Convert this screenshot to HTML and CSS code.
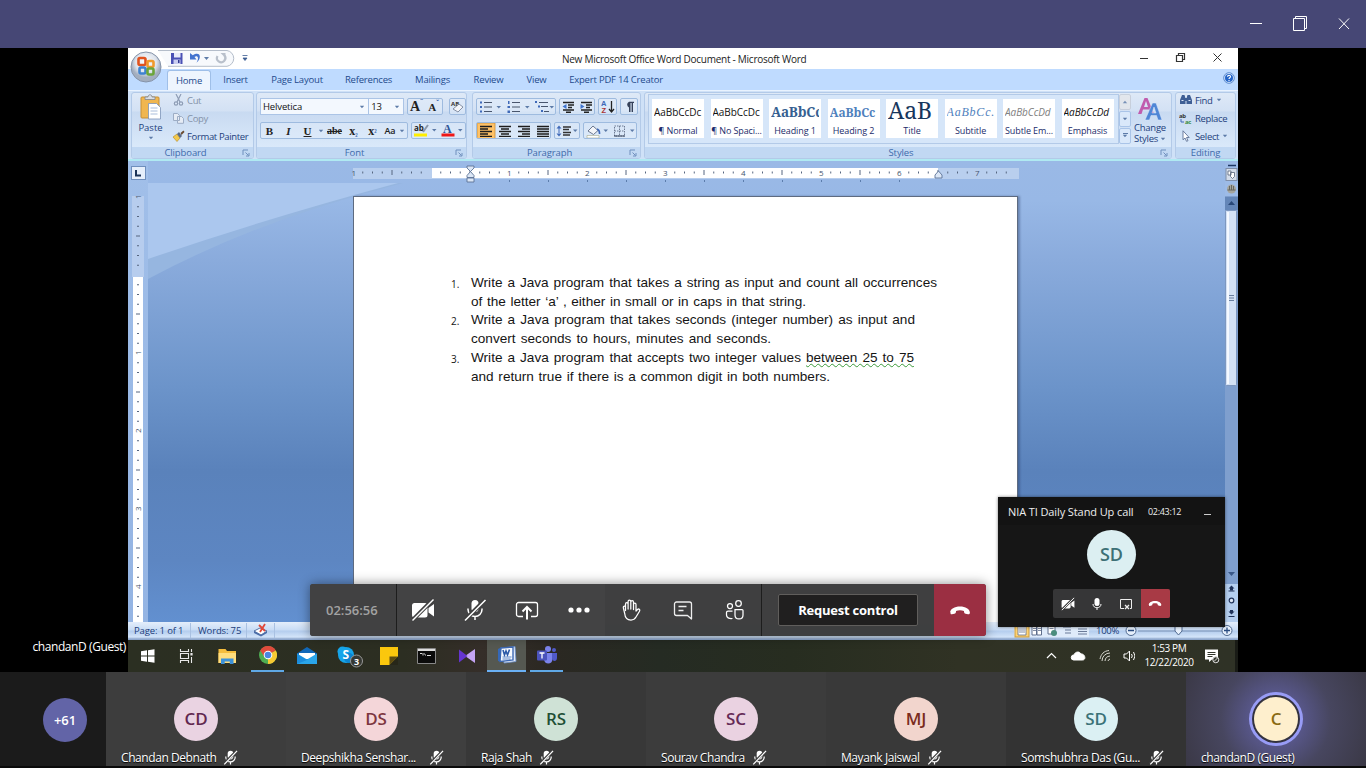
FILE: index.html
```html
<!DOCTYPE html>
<html lang="en">
<head>
<meta charset="utf-8">
<title>Meeting</title>
<link rel="stylesheet" href="styles.css">
</head>
<body>
<svg class="defs" width="0" height="0">
  <symbol id="micoff" viewBox="0 0 24 24"><rect x="8.5" y="2" width="7" height="12" rx="3.5" fill="#fff"/><path d="M5 10.5v1a7 7 0 0 0 14 0v-1M12 18.500v3.500" fill="none" stroke="#fff" stroke-width="1.500"/><path d="M1.500 22.500 22.500 1.500" stroke="#3e3e3e" stroke-width="4"/><path d="M2 22.500 22.500 2" stroke="#fff" stroke-width="1.600"/></symbol>
  <symbol id="micoff-s" viewBox="0 0 24 24"><rect x="7.500" y="1" width="9" height="14" rx="4.500" fill="#fff"/><path d="M4.500 10.500v1a7.500 7.500 0 0 0 15 0v-1M12 18.500v4.500" fill="none" stroke="#fff" stroke-width="1.900"/><path d="M1.500 22 22 1.500" stroke="#3e3e3e" stroke-width="4.500"/><path d="M2 23 22.500 1.500" stroke="#fff" stroke-width="2"/></symbol>
  <symbol id="camoff" viewBox="0 0 24 24"><rect x="1" y="5" width="15.500" height="14.500" rx="2.500" fill="#fff"/><path d="M17.500 10 23 6v12.500l-5.500-4z" fill="#fff"/><path d="M1 22.500 22.500 1" stroke="#404041" stroke-width="4"/><path d="M1.500 22.500 22.500 1.500" stroke="#fff" stroke-width="1.500"/></symbol>
  <symbol id="hang" viewBox="0 0 24 12"><path d="M1.200 8.200C1.500 4.500 6 1.700 12 1.700s10.500 2.800 10.800 6.500c.1 1.500-.8 2.100-2 1.900l-2.700-.5c-1-.2-1.500-.8-1.600-1.700l-.2-1.400c-2.700-1-5.900-1-8.600 0l-.2 1.400c-.1.900-.6 1.500-1.600 1.700l-2.700.5c-1.200.2-2.100-.4-1.200-1.900z" fill="#fff"/></symbol>
  <symbol id="dn" viewBox="0 0 6 4"><path d="M.8.8h4.400L3 3.300z" fill="#5d7ba8"/></symbol>
  <symbol id="launch" viewBox="0 0 8 8"><path d="M1 6V1h5M3.500 3.500l3 3M7 4v3H4" fill="none" stroke="#6f8fbd" stroke-width="1"/></symbol>
</svg>

<header class="appbar">
  <svg width="110" height="24" viewBox="0 0 110 24" fill="none" stroke="#fff"><path d="M6 11.500h12"/><path d="M49.500 6.500h11v12h-11z"/><path d="M51.500 6V4.500h11v12H61"/><path d="m95 6.500 10 10.500m0-10.500L95 17"/></svg>
</header>

<main class="stage">
  <div class="side"><span class="self">chandanD (Guest)</span></div>

  <section class="screen">
    <div class="wtitle">
      <svg class="quick" width="136" height="21" viewBox="0 0 136 21">
        <path d="M30 2.500h69a8 8 0 0 1 0 15.800H40" fill="#f7f9fc" stroke="#b4bdca"/>
        <path d="M43 5h11.500v11H43z" fill="#4a51b5"/><path d="M46 5h6.500v4.500H46z" fill="#e8ebfa"/><path d="M45.500 11.500h7V16h-7z" fill="#c9cdf0"/><path d="M50 12h1.500v3H50z" fill="#31388f"/>
        <path d="M62 5v6.500h6.500L66.500 9c3-2 5 1 2 5.800 6-5 3.500-12-3.700-7.500z" fill="#4474cf"/>
        <path d="M76 9h5l-2.500 3z" fill="#5d7ba8"/>
        <path d="M96.500 7.500A4.200 4.200 0 1 1 89.500 8" fill="none" stroke="#b9c0cb" stroke-width="2.200"/><path d="M92.500 5h5v5z" fill="#b9c0cb"/>
        <path d="M114.500 7.500h5M115 10h4l-2 2.500z" fill="#3c5d92" stroke="#3c5d92" stroke-width=".8"/>
      </svg>
      <span class="wname">New Microsoft Office Word Document - Microsoft Word</span>
      <svg class="wctl" width="90" height="21" viewBox="0 0 90 21" fill="none" stroke="#333"><path d="M0 10.500h8"/><path d="M36.500 7.500h6v6h-6zM38.500 7V5.500h6v6H43" stroke-width="1.200"/><path d="m73.500 5.500 8 8m0-8-8 8"/></svg>
    </div>

    <nav class="tabs">
      <svg class="orb" width="34" height="34" viewBox="0 0 34 34">
        <defs><radialGradient id="og" cx=".5" cy=".35"><stop offset="0" stop-color="#fff"/><stop offset=".7" stop-color="#dde3ec"/><stop offset="1" stop-color="#a3aebf"/></radialGradient></defs>
        <circle cx="17" cy="17" r="15" fill="url(#og)" stroke="#8593a9"/>
        <g fill="none" stroke-width="2.600"><rect x="9.500" y="8" width="7" height="7" rx="1.500" stroke="#e0531f"/><rect x="18.500" y="11" width="6" height="6" rx="1.500" stroke="#f09a2b"/><rect x="10.500" y="17.500" width="6" height="6" rx="1.500" stroke="#3e82d0"/><rect x="18.500" y="18.500" width="6" height="6" rx="1.500" stroke="#6ba53a"/></g>
      </svg>
      <span class="tab on t1">Home</span><span class="tab t2">Insert</span><span class="tab t3">Page Layout</span><span class="tab t4">References</span><span class="tab t5">Mailings</span><span class="tab t6">Review</span><span class="tab t7">View</span><span class="tab t8">Expert PDF 14 Creator</span>
      <svg class="help" width="12" height="12" viewBox="0 0 12 12"><circle cx="6" cy="6" r="5.300" fill="#dcebfd" stroke="#5b8bd0"/><circle cx="6" cy="6" r="4" fill="#2464c8"/><path d="M4.500 4.800C4.500 2.800 7.600 2.900 7.500 4.700 7.400 5.800 6 5.700 6 7M6 8v1.200" fill="none" stroke="#fff" stroke-width="1.100"/></svg>
    </nav>

    <div class="ribbon">
      <div class="grp g-clip">
        <div class="gbody">
          <div class="paste"><svg width="24" height="26" viewBox="0 0 24 26"><rect x="2" y="3" width="18" height="21" rx="1" fill="#f0b64f" stroke="#c78f35"/><path d="M6 5.500V3h3c0-3 4-3 4 0h3v2.500z" fill="#d9dde3" stroke="#7e858f" stroke-width=".8"/><path d="M9.500 9.500h8l4 4V25h-12z" fill="#fff" stroke="#7b93b8" stroke-width=".8"/><path d="M11.500 14h7M11.500 17h7M11.500 20h7" stroke="#a9bddb"/></svg><span>Paste</span><svg width="6" height="4"><use href="#dn"/></svg></div>
          <div class="cliplist">
            <span class="cl dim"><svg width="13" height="12" viewBox="0 0 13 12" fill="none" stroke="#8e9db5" stroke-width="1.200"><path d="m4 0 4 8M9 0 5 8"/><circle cx="4" cy="9.500" r="1.700"/><circle cx="9" cy="9.500" r="1.700"/></svg><b>Cut</b></span>
            <span class="cl dim"><svg width="13" height="12" viewBox="0 0 13 12" fill="#e6ecf5" stroke="#9dadc5"><path d="M1.500 1.500h4l2 2v5h-6zM5.500 4.500h4l2 2v4.800h-6z"/></svg><b>Copy</b></span>
            <span class="cl"><svg width="13" height="12" viewBox="0 0 13 12"><path d="m1 7 4-3 3 4-3 3.500z" fill="#f2c94c" stroke="#b68620" stroke-width=".6"/><path d="m5 4 2-2 3 4-2 2z" fill="#5a6b86"/><path d="m8.500 3 3-2.500 1 1.500-3 3z" fill="#6a4a2e"/></svg><b>Format Painter</b></span>
          </div>
        </div>
        <div class="glabel"><span>Clipboard</span><svg width="8" height="8"><use href="#launch"/></svg></div>
      </div>

      <div class="grp g-font">
        <div class="gbody rows">
          <div class="brow">
            <span class="combo cf">Helvetica<svg width="6" height="4"><use href="#dn"/></svg></span><span class="combo cs">13<svg width="6" height="4"><use href="#dn"/></svg></span>
            <span class="bg w36 serif"><i class="big">A<sup>ˆ</sup></i><i class="sm">A<sup>ˇ</sup></i></span>
            <span class="bg w17 ml6"><svg width="15" height="14" viewBox="0 0 15 14"><text x="1" y="6" class="tiny">AB</text><path d="m3 9 6-5 4 3-5 5z" fill="#f4f6fa" stroke="#6c7890" stroke-width=".8"/></svg></span>
          </div>
          <div class="brow">
            <span class="bg w148 serif"><i><b>B</b></i><i><em>I</em></i><i><u><b>U</b></u></i><svg width="6" height="4"><use href="#dn"/></svg><i class="st"><s>abe</s></i><i class="x">x<sub>₂</sub></i><i class="x">x<sub>²</sub></i><i class="aa">Aa</i><svg width="6" height="4"><use href="#dn"/></svg></span>
            <span class="bg w56 ml3"><svg width="53" height="15" viewBox="0 0 53 15"><text x="2" y="8" class="ab">ab</text><path d="m11 9 5-7" stroke="#8a97aa" stroke-width="2"/><path d="M2 10.500h13v3H2z" fill="#ffee00"/><path d="M20 6h4.500l-2.200 2.500zM46 6h4.500l-2.200 2.500z" fill="#5d7ba8"/><text x="31" y="10" class="ca">A</text><path d="M29.500 10.500h13v3h-13z" fill="#f01818"/></svg></span>
          </div>
        </div>
        <div class="glabel"><span>Font</span><svg width="8" height="8"><use href="#launch"/></svg></div>
      </div>

      <div class="grp g-para">
        <div class="gbody rows">
          <div class="brow gap3">
            <span class="bg w80"><svg width="78" height="16" viewBox="0 0 78 16"><g stroke="#49566d" stroke-width="1.200"><path d="M7 3.500h8M7 8h8M7 12.500h8M35 3.500h8M35 8h8M35 12.500h8M62 3.500h9M64 7.500h7M67 12.500h5"/></g><g fill="#3f69b8"><path d="M3 2.500h2v2H3zM3 7h2v2H3zM3 11.500h2v2H3zM31 2h1.500v3H31zM30.500 7h2.500v2h-2.500zM30.500 11.500h2.500v2.500h-2.500zM58 2h2v2h-2zM61 6.500h2v2h-2zM64 11h2v2h-2z"/></g><path d="M19.500 7h4.500l-2.200 2.500zM48 7h4.500l-2.200 2.500zM72.500 7H77l-2.200 2.500z" fill="#5d7ba8"/></svg></span>
            <span class="bg w36"><svg width="35" height="16" viewBox="0 0 35 16"><path d="M3 3.500h11M8 6h6M8 8.500h4M3 11h11M6 13.300h5M21 3.500h11M26 6h6M26 8.500h4M21 11h11M24 13.300h5" stroke="#222" stroke-width="1.400"/><path d="m6.500 5-4 2.500 4 2.500zM20.500 5l4 2.500-4 2.500z" fill="#3f74cf"/></svg></span>
            <span class="bg w19"><svg width="17" height="15" viewBox="0 0 17 15"><text x="2" y="7" class="sa">A</text><text x="2.500" y="14" class="sz">Z</text><path d="M12.500 2v11m-2.500-3 2.500 3 2.500-3" fill="none" stroke="#222" stroke-width="1.300"/></svg></span>
            <span class="bg w18"><svg width="16" height="16" viewBox="0 0 16 16"><path d="M8 8.500a3.200 3.200 0 0 1 0-5.800h5V4h-1v9h-1.400V4H9.500v9H8z" fill="#36425a"/></svg></span>
          </div>
          <div class="brow gap3">
            <span class="bg w76"><svg width="75" height="16" viewBox="0 0 75 16"><rect width="18" height="16" fill="#ffc267" stroke="#c98f38" stroke-width=".8"/><path d="M3 3.500h12M3 6h8M3 8.500h12M3 11h8M3 13.300h12M22 3.500h12M24 6h8M22 8.500h12M24 11h8M22 13.300h12M41 3.500h12M45 6h8M41 8.500h12M45 11h8M41 13.300h12M60 3.500h12M60 6h12M60 8.500h12M60 11h12M60 13.300h12" stroke="#1d1d1d" stroke-width="1.300"/></svg></span>
            <span class="bg w26"><svg width="25" height="16" viewBox="0 0 25 16"><path d="M8 4h8M8 6.500h6M8 9.500h8M8 12h7" stroke="#333" stroke-width="1.300"/><path d="M1.500 5.500 4 2.500l2.500 3zM1.500 10.500l2.500 3 2.500-3zM3.500 5h1v6h-1z" fill="#3f69b8"/><path d="M18 6.500h4.500L20.200 9z" fill="#5d7ba8"/></svg></span>
            <span class="bg w54"><svg width="53" height="16" viewBox="0 0 53 16"><path d="m4 8 5-5 5 4.500-4.500 4z" fill="#f3f5f9" stroke="#6c7890"/><path d="M13 6c3 1 2.500 3 2.500 5" stroke="#3f69b8" stroke-width="1.600" fill="none"/><path d="M3 12.500h12V15H3z" fill="#fff" stroke="#a5a98c" stroke-width=".6"/><path d="M19.500 6.500H24L21.800 9zM46 6.500h4.500L48.200 9z" fill="#5d7ba8"/><path d="M30.500 3h10v10h-10zM35.500 3v10M30.500 8h10" fill="none" stroke="#6d7a92" stroke-dasharray="1.500 1"/><path d="M30 13h11" stroke="#39445a"/></svg></span>
          </div>
        </div>
        <div class="glabel"><span>Paragraph</span><svg width="8" height="8"><use href="#launch"/></svg></div>
      </div>

      <div class="grp g-sty">
        <div class="gbody">
          <div class="gallery">
            <div class="sc"><span class="sp">AaBbCcDc</span><span class="sn">¶ Normal</span></div>
            <div class="sc"><span class="sp">AaBbCcDc</span><span class="sn">¶ No Spaci...</span></div>
            <div class="sc"><span class="sp h1">AaBbCc</span><span class="sn">Heading 1</span></div>
            <div class="sc"><span class="sp h2">AaBbCc</span><span class="sn">Heading 2</span></div>
            <div class="sc"><span class="sp ti">AaB</span><span class="sn">Title</span></div>
            <div class="sc"><span class="sp su">AaBbCc.</span><span class="sn">Subtitle</span></div>
            <div class="sc"><span class="sp se">AaBbCcDd</span><span class="sn">Subtle Em...</span></div>
            <div class="sc"><span class="sp em">AaBbCcDd</span><span class="sn">Emphasis</span></div>
          </div>
          <div class="gscroll"><i class="off"><svg width="6" height="4" class="flip"><use href="#dn"/></svg></i><i><svg width="6" height="4"><use href="#dn"/></svg></i><i class="more"><svg width="6" height="4"><use href="#dn"/></svg></i></div>
          <div class="change"><svg width="28" height="26" viewBox="0 0 28 26"><path d="M2 18 8.500 2h3L18 18h-3.500l-1.500-4.500H7L5.500 18zM8 11h4L10 5z" fill="#c05cae"/><path d="m9 24 7.500-17h3.500L26 24h-4l-1.500-4.500h-5.500L13.500 24zM16 17h4l-2-6z" fill="#4f86d6" stroke="#dce8f8" stroke-width=".5"/></svg><span>Change</span><span>Styles <svg width="6" height="4"><use href="#dn"/></svg></span></div>
        </div>
        <div class="glabel"><span>Styles</span><svg width="8" height="8"><use href="#launch"/></svg></div>
      </div>

      <div class="grp g-edit">
        <div class="gbody edit">
          <span class="cl"><svg width="14" height="12" viewBox="0 0 14 12" fill="#3f5f95"><path d="M3 1h2.500l1 3.500V10H1V6zM8.500 1H11l2 5v4H7.500V4.500zM6 4h2v3H6z"/><path d="M2.500 6.500h2M9.500 6.500h2" stroke="#dce8f8"/></svg><b>Find <svg width="6" height="4"><use href="#dn"/></svg></b></span>
          <span class="cl"><svg width="14" height="12" viewBox="0 0 14 12"><text x="0" y="5.500" class="tiny">ab</text><text x="6" y="11.500" class="tiny gr">ac</text><path d="M2 7v3h3" fill="none" stroke="#3f69b8"/></svg><b>Replace</b></span>
          <span class="cl"><svg width="14" height="12" viewBox="0 0 14 12"><path d="M4 .8v9l2-1.800 1.500 3.300 1.500-.6L7.500 7.500h2.700z" fill="#fff" stroke="#5f7396" stroke-width=".9"/></svg><b>Select <svg width="6" height="4"><use href="#dn"/></svg></b></span>
        </div>
        <div class="glabel"><span>Editing</span></div>
      </div>
    </div>

    <div class="work">
      <div class="leftcol">
        <span class="tabsel"><svg width="12" height="12" viewBox="0 0 12 12"><path d="M4 3v5.500h5" fill="none" stroke="#1b3358" stroke-width="2"/></svg></span>
        <svg class="vruler" width="20" height="426" viewBox="0 0 20 426">
          <defs><pattern id="vt" x="0" y="79" width="20" height="78" patternUnits="userSpaceOnUse"><path d="M9 9.750h2M9 19.500h2M9 29.250h2M8 39h4M9 48.750h2M9 58.500h2M9 68.250h2" stroke="#55657f"/></pattern></defs>
          <path d="M4 0h12v81H4z" fill="#b7cdee"/><path d="M5 81h10v345H5z" fill="#fff"/><path d="M4 0h12v426H4z" fill="url(#vt)"/>
          <g class="rn"><text transform="translate(13 3) rotate(-90)">1</text><text transform="translate(13 159) rotate(-90)">1</text><text transform="translate(13 237) rotate(-90)">2</text><text transform="translate(13 315) rotate(-90)">3</text><text transform="translate(13 393) rotate(-90)">4</text></g>
        </svg>
      </div>
      <div class="canvas">
        <svg class="swoosh" width="260" height="100" viewBox="0 0 260 100"><path d="M0 0h255Q110 37 0 96z" fill="#96b6e0"/><path d="M0 0h250Q120 35 0 76z" fill="#abc7ee"/></svg>
        <svg class="hruler" width="666" height="22" viewBox="0 0 666 22">
          <defs><pattern id="ht" x="78" y="0" width="78" height="22" patternUnits="userSpaceOnUse"><path d="M9.750 10.500v2M19.500 10.500v2M29.250 10.500v2M39 9v5M48.750 10.500v2M58.500 10.500v2M68.250 10.500v2" stroke="#55657f"/></pattern></defs>
          <path d="M0 7h666v11H0z" fill="#b9cfee"/><path d="M79 7h506v10H79z" fill="#fff"/><path d="M0 7h660v10H0z" fill="url(#ht)"/>
          <g class="rn"><text x="-1.500" y="15">1</text><text x="154" y="15">1</text><text x="232" y="15">2</text><text x="310" y="15">3</text><text x="388" y="15">4</text><text x="466" y="15">5</text><text x="544" y="15">6</text><text x="622" y="15">7</text></g>
          <path d="M156.500 19v2M195.500 19v2M234.500 19v2M273.500 19v2M312.500 19v2M351.500 19v2M390.500 19v2M429.500 19v2M468.500 19v2M507.500 19v2M546.500 19v2" stroke="#5c7dac"/>
          <g fill="#dce7f6" stroke="#5c7396" stroke-width=".9"><path d="M114 5h7v2l-3.500 3.500L114 7zM117.500 10.500l3.500 4v2h-7v-2zM114 17h7v4h-7zM585.500 10l3.500 4v3h-7v-3z"/></g>
        </svg>
        <article class="page">
          <ol class="doc">
            <li><span class="num">1.</span><div><span class="ln a1">Write a Java program that takes a string as input and count all occurrences</span><span class="ln a2">of the letter ‘a’ , either in small or in caps in that string.</span></div></li>
            <li><span class="num">2.</span><div><span class="ln a3">Write a Java program that takes seconds (integer number) as input and</span><span class="ln a4">convert seconds to hours, minutes and seconds.</span></div></li>
            <li><span class="num">3.</span><div><span class="ln a5">Write a Java program that accepts two integer values <u class="gram">between 25 to 75</u></span><span class="ln a6">and return true if there is a common digit in both numbers.</span></div></li>
          </ol>
        </article>
      </div>
      <svg class="vscroll" width="13" height="461" viewBox="0 0 13 461">
        <path d="M0 35h13v388H0z" fill="#7f9fce"/><path d="M0 423h13v38H0z" fill="#b4ceef"/>
        <path d="M3 4.500h8" stroke="#1f3864" stroke-width="1.500"/><rect x="1" y="7.500" width="11" height="12" fill="#d3dcea" stroke="#7f8ea8"/><path d="M3 10h3v4H3zM5.500 11.500h4v4l-2 2-2-2z" fill="#fff" stroke="#56637a" stroke-width=".8"/>
        <circle cx="6.500" cy="28" r="4.500" fill="#a5a59e"/><path d="M2.500 29h8M4.500 25v4M6.500 24v5M8.500 25v4" stroke="#66665f"/>
        <path d="M0 36h13v13H0z" fill="#6486b8"/><path d="M3 44h7l-3.500-4z" fill="#284777"/>
        <rect x=".5" y="49.500" width="11" height="175" rx="1" fill="#d3e1f5" stroke="#7d97bf"/><path d="M3 51v172" stroke="#f5f9ff" stroke-width="2"/><path d="M4 134.500h5M4 137h5M4 139.500h5" stroke="#6a7f9f"/>
        <path d="M3 411h7l-3.500 4z" fill="#3a5888"/><path d="M3.500 427.500 6.500 424.500l3 3zM5 427.500h3v2H5zM3.500 450.500h6l-3 3zM5 449h3v2H5z" fill="#20335a"/><path d="M3.500 430h6M3.500 455.500h6" stroke="#20335a"/><circle cx="6.500" cy="439.500" r="2.300" fill="#dce7f6" stroke="#20335a" stroke-width="1.200"/>
      </svg>
    </div>

    <div class="status">
      <span class="s1">Page: 1 of 1</span><span class="s2">Words: 75</span><span class="s3"><svg width="16" height="14" viewBox="0 0 16 14"><path d="m1 8 6-3 7 3-6 4z" fill="#fff" stroke="#5572a2"/><path d="m1 8 7 4 6-4v2l-6 3.500L1 10z" fill="#4b6da8"/><path d="m6 2 6 6m0-7L7 9" stroke="#e0483a" stroke-width="1.800"/></svg></span>
      <svg class="sview" width="224" height="16" viewBox="0 0 224 16"><path d="M0 1h75v13H0z" fill="#dfebfa"/><rect x="1" y="1" width="14" height="13" fill="#ffd272" stroke="#c99b3e"/><path d="M4 3h8v9H4z" fill="#fff" stroke="#5f6f8d" stroke-width=".8"/><path d="M5 5h6M5 7h6M5 9h6" stroke="#5f6f8d" stroke-width=".8"/><path d="M18 3h4.500v9H18zM23 3h4.500v9H23zM34 3h7v8h-7z" fill="#fff" stroke="#5f6f8d"/><path d="M19 5.500h3M19 7.500h3M24 5.500h3M24 7.500h3M35.500 5.500h4" stroke="#5f6f8d" stroke-width=".8"/><circle cx="40" cy="10" r="3" fill="#4b8d7d"/><path d="M49 4h8M51 7h6M51 10h6M64 3.500h9M64 6h9M64 8.500h9M64 11h9" stroke="#6a7a97" stroke-width="1.200"/><text x="82" y="11" class="pct">100%</text><path d="M124 8h88" stroke="#7890b4"/><g fill="#e6effb" stroke="#50698f"><circle cx="117" cy="7.500" r="5"/><circle cx="213" cy="7.500" r="5"/><path d="M161 3h7v5l-3.500 4-3.500-4z"/></g><path d="M114 7.500h6M210 7.500h6M213 4.500v6" stroke="#294b80" stroke-width="1.300"/></svg>
    </div>

    <div class="taskbar">
      <span class="tk k1"><svg width="14" height="14" viewBox="0 0 14 14" fill="#fff"><path d="M0 2.200 6 1.300v5.200H0zM7 1.200 13.500.2v6.300H7zM0 7.500h6v5.200l-6-.9zM7 7.500h6.500v6.300L7 12.800z"/></svg></span>
      <span class="tk k2"><svg width="14" height="14" viewBox="0 0 14 14" fill="none" stroke="#e8e8e8" stroke-width="1.100"><path d="M1.500 4.500h8v5h-8zM1.500 0v2.500h8V0M1.500 14v-2.500h8V14M12.500 0v3M12.500 8v6"/><path d="M12.500 4v2.500" stroke-width="2.200"/></svg></span>
      <span class="tk k3"><svg width="19" height="17" viewBox="0 0 19 17"><path d="M.5 1h7l1.500 2h9v12H.5z" fill="#f5bd3d"/><path d="M.5 5H18v10H.5z" fill="#ffdd7d"/><path d="M3 16v-5.500h12.500V16h-3.700v-2.500H6.700V16z" fill="#3d91d8"/></svg></span>
      <span class="tk k4 run"><svg width="18" height="18" viewBox="0 0 18 18"><circle cx="9" cy="9" r="9" fill="#4fae53"/><path d="M9 9 1.200 4.500A9 9 0 0 1 16.800 4.500z" fill="#df4b3c"/><path d="M9 9 16.800 4.500A9 9 0 0 1 9 18z" fill="#f7c933"/><path d="M1.200 4.500 5.500 11 9 9V5z" fill="#df4b3c"/><circle cx="9" cy="9" r="4.300" fill="#fff"/><circle cx="9" cy="9" r="3.300" fill="#4a86e0"/></svg></span>
      <span class="tk k5"><svg width="20" height="18" viewBox="0 0 20 18"><path d="M0 6.500 10 0l10 6.500V17H0z" fill="#1168b8"/><path d="M2 6h16v6H2z" fill="#fff"/><path d="m0 6.500 10 6 10-6V17H0z" fill="#2aa5ea"/><path d="M0 17V7l10 6z" fill="#1b8cdc"/></svg></span>
      <span class="tk k6"><svg width="28" height="24" viewBox="0 0 28 24"><circle cx="10" cy="11" r="8" fill="#16a5ea"/><circle cx="6.500" cy="7.500" r="5" fill="#16a5ea"/><circle cx="13" cy="14" r="5" fill="#0d84cf"/><text x="6.500" y="15" class="sk">S</text><circle cx="20.500" cy="17" r="6" fill="#373934" stroke="#999"/><text x="18" y="20.500" class="sk3">3</text></svg></span>
      <span class="tk k7"><svg width="18" height="18" viewBox="0 0 18 18"><path d="M0 0h18v9.500L9.500 18H0z" fill="#fbc70d"/><path d="M18 9.500V18H9.500z" fill="#272719"/><path d="M18 9.500H9.500V18z" fill="#5d4c12"/></svg></span>
      <span class="tk k8"><svg width="19" height="16" viewBox="0 0 19 16"><path d="M.5.500h18v15H.5z" fill="#0b0b0b" stroke="#888"/><path d="M1 1h17v2H1z" fill="#ddd"/><path d="M3 5.500h2M6 5v2.500M7.500 5.500l1 2M10 7.500h4" stroke="#ddd"/></svg></span>
      <span class="tk k9"><svg width="18" height="16" viewBox="0 0 18 16"><path d="M17 1v14L7 8z" fill="#c4a4f4"/><path d="M1 1.500 9.500 8 1 14.500z" fill="#6534cf"/></svg></span>
      <span class="tk k10 act"><svg width="20" height="18" viewBox="0 0 20 18"><path d="m6 2 12-1.500 1 15L7 17z" fill="#e3ebf8" stroke="#6d92cc" stroke-width=".8"/><path d="m1 3 4-2v15l-4-1z" fill="#3468b8"/><path d="m4 2 12-1v13L3 15.500z" fill="#f7faff" stroke="#3c68b3" stroke-width="1.400"/><path d="m6 4 1.500 5L9 5l1.500 4L12.500 3.500" fill="none" stroke="#2c5aa8" stroke-width="1.600"/><path d="M5.500 11h9M5.500 13h8" stroke="#5f86c6"/></svg></span>
      <span class="tk k11 run"><svg width="20" height="18" viewBox="0 0 20 18"><circle cx="11" cy="3" r="3" fill="#7b83eb"/><circle cx="17" cy="4" r="2" fill="#5059c9"/><path d="M7 7h8.500v6c0 6-8.500 6-8.500 0z" fill="#7b83eb"/><path d="M15 7h5v5c0 4-5 4-5 0z" fill="#5059c9"/><rect y="4.500" width="10" height="10" rx="1" fill="#4b53bc"/><path d="M2.500 7h5M5 7v5.500" stroke="#fff" stroke-width="1.300"/></svg></span>
      <svg class="tray" width="90" height="20" viewBox="0 0 90 20" fill="none" stroke="#fff"><path d="m2 12 4.500-4.500L11 12" stroke-width="1.200"/><path d="M28.500 14a2.500 2.500 0 0 1 .5-5c1-3.500 5.500-4 7-1 4-.5 5.500 6 1.500 6z" fill="#fff"/><path d="M57 15A8 8 0 0 1 65 7M60 15a5.500 5.500 0 0 1 5-5M63 15a3 3 0 0 1 2-2M55 13C56 8 59 5 64 4.500" stroke="#d8d8d0"/><path d="M79 8v4h2.500l3 3V5l-3 3zM86.500 8q1.500 2 0 4M88.500 6q3 4 0 8"/></svg>
      <div class="clock"><span>1:53 PM</span><span>12/22/2020</span></div>
      <svg class="note" width="15" height="15" viewBox="0 0 15 15"><path d="M0 .5h13v10H7L4 13v-2.500H0z" fill="#fff"/><path d="M2.500 3.500h8M2.500 5.500h8M2.500 7.500h5" stroke="#33362c"/><circle cx="10.800" cy="10.800" r="3" fill="#33362c" stroke="#ddd"/><path d="m9 12.500 3.500-3.500" stroke="#ddd"/></svg>
    </div>

    <aside class="mini">
      <div class="mhead"><span class="mt">NIA TI Daily Stand Up call</span><span class="mc">02:43:12</span><i></i></div>
      <div class="mav">SD</div>
      <div class="mctl"><span><svg width="14" height="14"><use href="#camoff"/></svg></span><span><svg width="14" height="14" viewBox="0 0 14 14"><rect x="4.500" y="1" width="5" height="8" rx="2.500" fill="#fff"/><path d="M3 7c0 5 8 5 8 0M7 11v2" fill="none" stroke="#fff"/></svg></span><span><svg width="14" height="14" viewBox="0 0 14 14" fill="none" stroke="#eee"><path d="M5 11.500H1.500v-9h11v9H11"/><path d="m6 8 4 4m0-4-4 4" stroke-width="1.300"/></svg></span><span class="red"><svg width="14" height="7"><use href="#hang"/></svg></span></div>
    </aside>
  </section>

  <div class="callbar">
    <span class="time">02:56:56</span>
    <div class="sec s4"><span><svg width="24" height="24"><use href="#camoff"/></svg></span><span><svg width="24" height="24"><use href="#micoff"/></svg></span><span><svg width="24" height="24" viewBox="0 0 24 24" fill="none" stroke="#fff"><path d="M8 18.500H3.500a2 2 0 0 1-2-2v-10a2 2 0 0 1 2-2h17a2 2 0 0 1 2 2v10a2 2 0 0 1-2 2H16" stroke-width="1.300"/><path d="M12 21.500V9.500M7.500 13.500 12 9l4.500 4.500" stroke-width="2"/></svg></span><span><svg width="24" height="24" viewBox="0 0 24 24" fill="#fff"><circle cx="4" cy="12" r="2.600"/><circle cx="12" cy="12" r="2.600"/><circle cx="20" cy="12" r="2.600"/></svg></span></div>
    <div class="sec s5"><span><svg width="24" height="24" viewBox="0 0 24 24" fill="none" stroke="#fff" stroke-width="1.250" stroke-linejoin="round" stroke-linecap="round"><path d="M6.500 12.500V6.200c0-2 2.600-2 2.600 0V11 3.500c0-2 2.700-2 2.700 0V11 4.200c0-2 2.700-2 2.700 0V11.500 6.500c0-1.900 2.500-1.900 2.500 0V13l1.500-1.500c1.200-1.200 3 .2 2 1.700L17 19c-1 1.800-2.500 3-5 3-4 0-6-3-6.300-6.500L4.300 9.700c-.2-1.800 1.900-2.200 2.200-.4z"/></svg></span><span><svg width="24" height="24" viewBox="0 0 24 24" fill="none" stroke="#eee" stroke-width="1.300" stroke-linejoin="round"><path d="M5.500 4h13a2 2 0 0 1 2 2v15l-4-3.500h-11a2 2 0 0 1-2-2V6a2 2 0 0 1 2-2zM7.500 8.500h8M7.500 12.500h5"/></svg></span><span><svg width="24" height="24" viewBox="0 0 24 24" fill="none" stroke="#fff" stroke-width="1.250"><circle cx="15.500" cy="5.500" r="2.800"/><circle cx="7" cy="8" r="2.500"/><path d="M12 11.500h7a1 1 0 0 1 1 1V17c0 5.300-8 5.300-8 0zM9.500 13H5a1.500 1.500 0 0 0-1.500 1.500V17c0 2.500 2.500 4 6 3.500"/></svg></span></div>
    <button class="req">Request control</button>
    <span class="end"><svg width="22" height="11"><use href="#hang"/></svg></span>
  </div>
</main>

<footer class="people">
  <div class="tile more61"><span class="av p0">+61</span></div>
  <div class="tile c1"><span class="av p1">CD</span><p><span class="n1">Chandan Debnath</span><svg width="15" height="15"><use href="#micoff-s"/></svg></p></div>
  <div class="tile c2"><span class="av p2">DS</span><p><span class="n2">Deepshikha Senshar...</span><svg width="15" height="15"><use href="#micoff-s"/></svg></p></div>
  <div class="tile c3"><span class="av p3">RS</span><p><span class="n3">Raja Shah</span><svg width="15" height="15"><use href="#micoff-s"/></svg></p></div>
  <div class="tile c4"><span class="av p4">SC</span><p><span class="n4">Sourav Chandra</span><svg width="15" height="15"><use href="#micoff-s"/></svg></p></div>
  <div class="tile c5"><span class="av p5">MJ</span><p><span class="n5">Mayank Jaiswal</span><svg width="15" height="15"><use href="#micoff-s"/></svg></p></div>
  <div class="tile c6"><span class="av p6">SD</span><p><span class="n6">Somshubhra Das (Gu...</span><svg width="15" height="15"><use href="#micoff-s"/></svg></p></div>
  <div class="tile c7"><span class="av p7">C</span><p><span class="n7">chandanD (Guest)</span></p></div>
</footer>
</body>
</html>
```

FILE: styles.css
```css
* { box-sizing: border-box; }
body { margin: 0; width: 1366px; height: 768px; overflow: hidden; background: #000; font-family: "Open Sans", "Noto Sans", sans-serif; display: flex; flex-direction: column; }
svg { display: block; flex: none; }
.defs { position: absolute; }
i { font-style: normal; }

.appbar { height: 48px; background: #464775; display: flex; justify-content: flex-end; align-items: center; padding-right: 12px; flex: none; }

.stage { height: 624px; display: flex; position: relative; flex: none; background: #000; }
.side { width: 128px; display: flex; align-items: flex-end; justify-content: flex-end; padding: 0 2px 16px 0; color: #fff; font-size: 12px; font-weight: 500; }
.self { line-height: 18px; white-space: nowrap; letter-spacing: -.42px; }
.screen { width: 1110px; display: flex; flex-direction: column; position: relative; overflow: hidden; color: #1e3f7c; font-size: 9px; }

.wtitle { height: 21px; background: #fff; display: flex; align-items: center; color: #222; flex: none; }
.wname { margin-left: 298px; width: 245px; font-size: 10px; white-space: nowrap; letter-spacing: -.26px; }
.wctl { margin-left: auto; margin-right: 8px; }

.tabs { height: 21px; background: #bfdbff; display: flex; position: relative; flex: none; }
.orb { position: absolute; left: 1px; top: -19px; }
.tab { line-height: 22px; font-size: 9.500px; white-space: nowrap; display: flex; justify-content: center; letter-spacing: -.2px; color: #234a8c; }
.on { background: #eef5fe; border: 1px solid #9fbfe8; border-bottom: 0; border-radius: 3px 3px 0 0; line-height: 19px; margin-top: 1px; }
.t1 { margin-left: 39px; width: 44px; }
.t2 { width: 49px; }
.t3 { width: 74px; }
.t4 { width: 69px; }
.t5 { width: 59px; }
.t6 { width: 53px; }
.t7 { width: 43px; }
.t8 { width: 116px; }
.help { margin: 3px 3px 0 auto; }

.ribbon { height: 71px; background: #cfe1f7; border-top: 1px solid #e9f3ff; border-bottom: 2px solid #b0eaf2; display: flex; padding: 1px 2px 0 3px; flex: none; }
.grp { height: 67px; border: 1px solid #b3cae8; border-radius: 3px; background: linear-gradient(#dee9f7 0, #d3e1f4 18px, #c8daf1 19px, #dae9fa 54px); display: flex; flex-direction: column; overflow: hidden; }
.g-clip { width: 123px; margin-right: 2px; }
.g-font { width: 211px; margin-right: 5px; }
.g-para { width: 169px; margin-right: 3px; }
.g-sty { width: 528px; margin-right: 3px; }
.g-edit { width: 61px; }
.gbody { height: 54px; display: flex; flex: none; }
.glabel { flex: 1; background: #c1d8f3; display: flex; align-items: center; justify-content: center; position: relative; color: #3e6aab; font-size: 9.500px; line-height: 11px; letter-spacing: -.1px; }
.glabel svg { position: absolute; right: 3px; top: 2px; }
.glabel span { padding-right: 14px; }
.g-edit .glabel span { padding: 0; }

.paste { width: 37px; display: flex; flex-direction: column; align-items: center; padding-top: 1px; font-size: 9.500px; line-height: 13px; }
.paste span { margin-top: 1px; margin-bottom: 2px; }
.cliplist { display: flex; flex-direction: column; gap: 6px; padding: 1px 0 0 3px; }
.cl { display: flex; align-items: center; gap: 2px; height: 12px; font-size: 9.500px; white-space: nowrap; letter-spacing: -.35px; }
.cl b { font-weight: 500; display: flex; align-items: center; gap: 3px; }
.dim { color: #8492a8; }

.rows { flex-direction: column; padding: 5px 0 0 3px; gap: 7px; }
.brow { display: flex; height: 17px; }
.gap3 { gap: 3px; }
.combo { background: #f3f8fe; border: 1px solid #abc4e6; color: #111; font-size: 9.500px; line-height: 15px; display: flex; justify-content: space-between; align-items: center; padding: 0 3px 0 2px; letter-spacing: -.15px; }
.cf { width: 110px; }
.cs { width: 35px; border-left: 0; margin-right: 3px; }
.bg { border: 1px solid #9ebbdf; border-radius: 2px; display: flex; align-items: center; background: rgba(226, 237, 250, .45); overflow: hidden; flex: none; }
.w36 { width: 36px; }
.w17 { width: 17px; }
.w148 { width: 148px; gap: 2px; }
.w56 { width: 55px; }
.w80 { width: 80px; }
.w19 { width: 19px; }
.w18 { width: 18px; }
.w76 { width: 75px; }
.w26 { width: 26px; }
.w54 { width: 54px; }
.ml6 { margin-left: 6px; }
.ml3 { margin-left: 3px; }
.serif { font-family: "Liberation Serif", serif; color: #222; font-size: 11px; font-weight: 700; }
.serif i { width: 17px; text-align: center; line-height: 14px; white-space: nowrap; }
.serif .big { font-size: 14px; }
.serif .sm { font-size: 11px; }
.serif .x { font-size: 12px; }
.serif sup { font-size: 8px; line-height: 0; color: #3560a8; }
.serif sub { font-size: 8px; line-height: 0; color: #3560a8; vertical-align: baseline; }
.serif .st { font-size: 10px; }
.serif .aa { font-family: "Open Sans", sans-serif; font-size: 9px; width: 14px; font-weight: 600; }
.tiny { font: 700 6px/1 "Open Sans", sans-serif; fill: #333; }
.gr { fill: #3c8d40; }
.ab { font: 700 8px "Open Sans", sans-serif; fill: #222; }
.ca { font: 700 12px "Liberation Serif", serif; fill: #2e5596; }
.sa { font: 700 7.500px "Liberation Sans", sans-serif; fill: #3f69b8; }
.sz { font: 700 7.500px "Liberation Sans", sans-serif; fill: #a33; }

.g-sty .gbody { padding-left: 3px; }
.gallery { margin-top: 1px; height: 50px; width: 471px; border: 1px solid #b3cae8; padding: 4px 3px; display: flex; justify-content: flex-start; gap: 6.500px; background: #d6e6f9; }
.sc { width: 52px; height: 39px; background: #fff; display: flex; flex-direction: column; align-items: center; overflow: hidden; color: #1b2c6b; flex: none; }
.sp { height: 26px; width: 48px; overflow: hidden; white-space: nowrap; line-height: 27px; font-size: 10px; color: #111; letter-spacing: -.05px; }
.sn { font-size: 9px; line-height: 11px; white-space: nowrap; letter-spacing: -.1px; font-weight: 500; }
.h1 { font: 700 13.500px/27px "Noto Serif", "Liberation Serif", serif; color: #365f91; letter-spacing: -.2px; }
.h2 { font: 700 12px/27px "Noto Serif", "Liberation Serif", serif; color: #4f81bd; letter-spacing: -.1px; }
.ti { font: 400 23px/22px "Noto Serif", "Liberation Serif", serif; color: #17365d; }
.su { font: italic 400 12px/27px "Liberation Serif", serif; color: #4f81bd; letter-spacing: .8px; }
.se { font-style: italic; color: #808080; }
.em { font-style: italic; }
.gscroll { width: 12px; margin-top: 1px; height: 50px; display: flex; flex-direction: column; gap: 1px; }
.gscroll i { flex: 1; border: 1px solid #a9c4e8; border-radius: 2px; background: #d9e8fa; display: flex; align-items: center; justify-content: center; }
.gscroll .off { background: #e4e6ea; border-color: #c3cad5; opacity: .8; }
.more { position: relative; }
.more::before { content: ""; position: absolute; left: 3px; top: 4px; width: 5px; height: 1px; background: #5d7ba8; }
.flip { transform: scaleY(-1); }
.change { width: 38px; display: flex; flex-direction: column; align-items: center; padding-top: 3px; line-height: 10.500px; font-size: 9.500px; letter-spacing: -.25px; }
.change span { display: flex; align-items: center; gap: 2px; }
.change svg + span { margin-top: 1px; }
.edit { flex-direction: column; gap: 6px; padding: 1px 0 0 3px; }

.work { height: 461px; display: flex; background: linear-gradient(#9ab9e6 0, #98b8e6 40px, #8aabdc 100px, #6c94ca 225px, #5a82bb 310px, #5d86c2 400px, #6290d0 461px); flex: none; }
.leftcol { width: 20px; background: linear-gradient(#a1bfe9, #94b4e3); display: flex; flex-direction: column; }
.tabsel { margin: 5px 0 13px 3px; width: 15px; height: 14px; border: 1px solid #6f8fbd; background: #e6effb; }
.vruler { margin-top: 3px; }
.rn { font: 8px "Open Sans", sans-serif; fill: #44546d; }
.canvas { width: 1077px; position: relative; display: flex; flex-direction: column; padding-left: 205px; overflow: hidden; }
.swoosh { position: absolute; left: 0; top: 22px; }
.hruler { overflow: visible; }
.page { margin-top: 13px; width: 665px; height: 426px; background: #fff; border: 1px solid #5e6b80; border-bottom: 0; box-shadow: 2px 0 2px rgba(30, 50, 90, .35); padding: 77px 0 0 97px; position: relative; }
.doc { margin: 0; padding: 0; list-style: none; font: 13.600px/18.700px "Liberation Sans", Arial, sans-serif; color: #151515; }
.doc li { display: flex; }
.num { width: 20px; font: 500 10px/20px "Open Sans", sans-serif; flex: none; }
.ln { display: block; white-space: nowrap; text-align: justify; text-align-last: justify; }
.a1 { width: 466px; }
.a2 { width: 335px; }
.a3 { width: 444px; }
.a4 { width: 300px; }
.a5 { width: 443px; }
.a6 { width: 359px; }
.gram { text-decoration: underline wavy #3a9a3a 1px; text-underline-offset: 1px; text-decoration-skip-ink: none; }
.vscroll { background: #9dbbe7; }

.status { height: 18px; background: linear-gradient(#e4eefb, #c8dcf5 8px, #b4cdee 9px, #d3e4f9 15px, #8ea7cd 17px); display: flex; align-items: center; color: #1c3d7a; font-size: 9.500px; flex: none; padding-bottom: 1px; }
.status span { height: 15px; line-height: 15px; white-space: nowrap; border-right: 1px solid #a9c1e2; letter-spacing: -.15px; }
.s1 { width: 63px; padding-left: 6px; }
.s2 { width: 56px; padding-left: 7px; }
.s3 { width: 28px; padding-left: 6px; }
.sview { margin: 0 0 0 739px; }
.pct { font: 9.500px "Open Sans", sans-serif; fill: #1c3d7a; letter-spacing: -.3px; }

.taskbar { height: 32px; background: linear-gradient(90deg, #2b2f22, #2c2e22 25%, #352e29 32%, #2b2822 38%, #252b23 48%, #272d20 60%, #303224 75%, #2f3226 100%); display: flex; align-items: center; flex: none; border-right: 3px solid #191b16; }
.tk { width: 40px; height: 32px; display: flex; align-items: center; justify-content: center; flex: none; }
.k1 { width: 39px; }
.k2 { width: 38px; }
.k3 { width: 45px; }
.k4 { width: 33px; margin: 0 3px 0 1px; }
.k6 { width: 46px; }
.k7 { width: 32px; }
.k8 { width: 42px; }
.k9 { width: 40px; }
.k11 { width: 33px; margin-left: 4px; }
.run { border-bottom: 2px solid #5fa8e6; }
.act { background: #555851; border-bottom: 2px solid #6ab0f5; width: 39px; }
.sk { font: 700 12px "Open Sans", sans-serif; fill: #fff; }
.sk3 { font: 700 9px "Open Sans", sans-serif; fill: #fff; }
.tray { margin-left: auto; }
.clock { display: flex; flex-direction: column; align-items: center; color: #fff; font-size: 10px; line-height: 14.500px; width: 52px; margin: 0 10px 2px 8px; letter-spacing: -.4px; white-space: nowrap; }
.note { margin-right: 15px; }

.mini { position: absolute; left: 870px; top: 449px; width: 227px; height: 130px; background: #161616; display: flex; flex-direction: column; align-items: center; color: #eee; box-shadow: 0 0 3px rgba(0, 0, 0, .5); }
.mhead { height: 28px; width: 100%; display: flex; align-items: center; padding: 0 14px 0 10px; background: #131313; font-size: 11px; }
.mt { width: 140px; white-space: nowrap; letter-spacing: -.1px; font-weight: 500; }
.mc { font-size: 9px; letter-spacing: -.3px; font-weight: 500; }
.mhead i { width: 7px; height: 1px; background: #ccc; margin: 6px 0 0 auto; }
.mav { width: 49px; height: 49px; border-radius: 50%; background: #dceff2; color: #3d7076; font-weight: 600; font-size: 18px; line-height: 49px; text-align: center; margin-top: 5px; }
.mctl { display: flex; margin-top: 10px; border-radius: 2px; overflow: hidden; background: #363637; }
.mctl span { width: 29.250px; height: 29px; display: flex; align-items: center; justify-content: center; }
.mctl .red { background: #a83a45; }

.callbar { position: absolute; left: 310px; top: 536px; width: 676px; height: 52px; background: rgba(58, 58, 59, .975); border-radius: 3px; display: flex; align-items: center; overflow: hidden; box-shadow: 0 0 12px rgba(0, 0, 0, .45); }
.time { width: 87px; height: 52px; line-height: 52px; border-right: 1px solid #1d1d1d; color: #a3a3a3; font-weight: 600; font-size: 13px; padding-left: 16px; letter-spacing: 0; background: #414142; }
.sec { display: flex; height: 52px; }
.sec span { display: flex; align-items: center; justify-content: center; width: 52px; }
.s4 { background: #434344; width: 208px; }
.s5 { width: 157px; border-right: 1px solid #1d1d1d; }
.s5 span { padding-right: 1px; }
.req { margin: 0 16px; width: 140px; height: 32px; background: #201f1f; border: 1px solid #605e5c; border-radius: 2px; color: #fff; font: 700 13px "Open Sans", sans-serif; padding: 0; letter-spacing: -.23px; }
.end { width: 52px; height: 52px; background: #9b2f42; display: flex; align-items: center; justify-content: center; }

.people { height: 96px; border-bottom: 2px solid #0a0a0a; display: flex; flex: none; }
.tile { width: 180px; height: 94px; display: flex; flex-direction: column; align-items: center; padding-top: 25px; flex: none; }
.tile p { margin: 8px 0 0; width: 100%; padding-left: 15px; display: flex; align-items: center; gap: 7px; color: #fff; font-size: 12px; font-weight: 500; line-height: 17px; white-space: nowrap; letter-spacing: -.43px; text-shadow: 0 1px 1px #000; }
.more61 { width: 106px; background: #1b1b1b; padding: 26px 0 0 24px; }
.c1 { background: #3d3d3d; }
.c2 { background: #3f3f3f; }
.c3 { background: #383838; }
.c4 { background: #3c3c3c; }
.c5 { background: #393939; }
.c6 { background: #333; }
.c7 { background: radial-gradient(circle at 90px 47px, #5b5a92 20px, #47465f 55px, #3b3947 100px); }
.av { width: 44px; height: 44px; border-radius: 50%; text-align: center; line-height: 44px; font-size: 17px; font-weight: 600; flex: none; letter-spacing: -.1px; }
.p0 { background: #6264a7; color: #fff; font-size: 13px; }
.p1 { background: #ead3e2; color: #62284f; }
.p2 { background: #f4d6d9; color: #7d3640; }
.p3 { background: #cfe2d6; color: #1f4f35; }
.p4 { background: #ead2e1; color: #652a56; }
.p5 { background: #f2d5cd; color: #7b2c1c; }
.p6 { background: #dbf0f3; color: #3b7378; }
.p7 { background: #feefcd; color: #8a6a12; box-shadow: 0 0 0 2px #33323f, 0 0 0 5px #989cf6; }
.n2, .n6 { width: 121px; }
```
